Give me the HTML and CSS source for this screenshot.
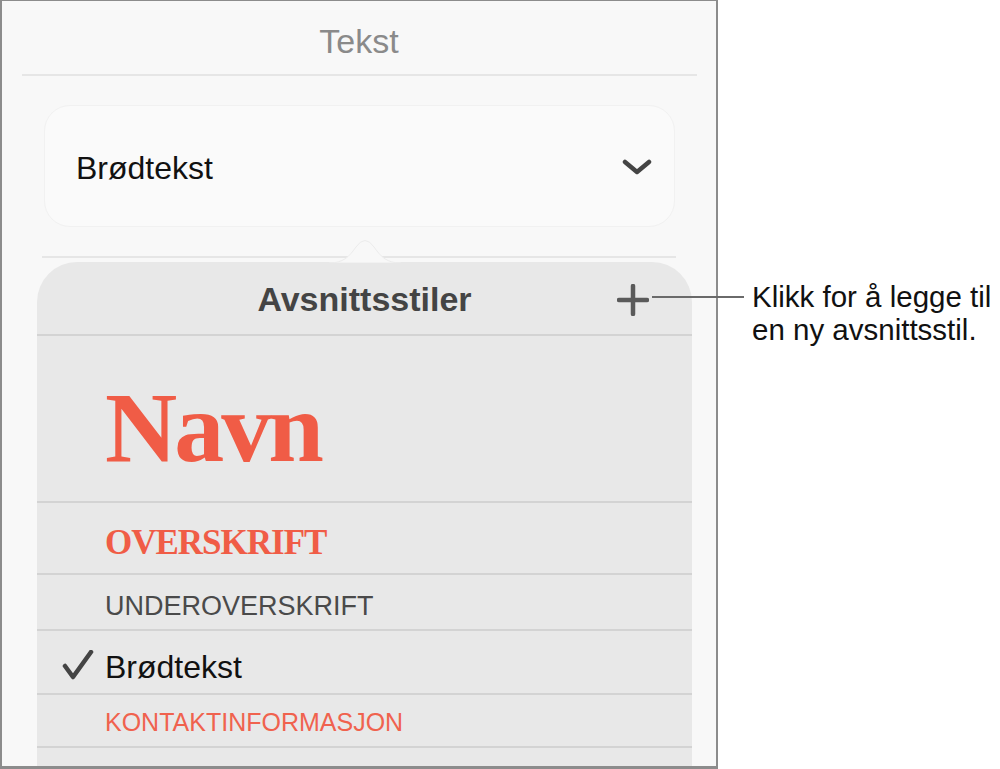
FILE: index.html
```html
<!DOCTYPE html>
<html lang="nb">
<head>
  <meta charset="UTF-8">
  <meta name="viewport" content="width=device-width, initial-scale=1.0">
  <title>Tekst</title>
  <link rel="stylesheet" href="styles.css">
</head>
<body>
  <div class="page">
    <div class="frame">
      <h1 class="title">Tekst</h1>
      <div class="rule rule-top"></div>

      <div class="style-picker">
        <span class="style-name">Brødtekst</span>
        <svg class="chevron" width="30" height="16" viewBox="0 0 30 16">
          <path d="M3 3 L15 13 L27 3" fill="none" stroke="#444" stroke-width="4.5" stroke-linecap="round" stroke-linejoin="round"/>
        </svg>
      </div>

      <div class="rule rule-mid"></div>

      <div class="popover">
        <svg class="popover-arrow" width="72" height="30" viewBox="0 0 72 30">
          <path d="M0 30 C14 30 20 24 27 14 Q36 1 45 14 C52 24 58 30 72 30 Z" fill="#f8f8f8" stroke="#ececec" stroke-width="1"/>
        </svg>
        <div class="popover-header">
          <span></span>
          <h2 class="popover-title">Avsnittsstiler</h2>
          <svg class="add-icon" width="32" height="32" viewBox="0 0 32 32">
            <path d="M16 2 V30 M2 16 H30" stroke="#5a5a5a" stroke-width="4.5" stroke-linecap="round"/>
          </svg>
        </div>
        <ul class="styles">
          <li class="row row-name"><span class="s-name">Navn</span></li>
          <li class="row row-heading"><span class="s-heading">OVERSKRIFT</span></li>
          <li class="row row-sub"><span class="s-sub">UNDEROVERSKRIFT</span></li>
          <li class="row row-body">
            <svg class="check" width="32" height="30" viewBox="0 0 32 30">
              <path d="M3 16 L11 27 L29 2" fill="none" stroke="#444" stroke-width="4.5" stroke-linecap="round" stroke-linejoin="round"/>
            </svg>
            <span class="s-body">Brødtekst</span>
          </li>
          <li class="row row-contact"><span class="s-contact">KONTAKTINFORMASJON</span></li>
          <li class="row row-empty"></li>
        </ul>
      </div>
    </div>

    <div class="note">Klikk for å legge til<br>en ny avsnittsstil.</div>
    <div class="leader"></div>
  </div>
</body>
</html>
```

FILE: styles.css
```css
body {
  margin: 0;
  background: #fff;
  font-family: "Liberation Sans", Arial, sans-serif;
}

.page {
  position: relative;
  display: flex;
  align-items: flex-start;
  width: 1000px;
  height: 769px;
}

.frame {
  box-sizing: border-box;
  width: 718px;
  height: 769px;
  border: 2px solid #8c8c8c;
  border-top-width: 1px;
  border-bottom-width: 3px;
  background: #f8f8f8;
  overflow: hidden;
}

.title {
  margin: 0;
  padding: 20px 0 13px;
  font-size: 34px;
  font-weight: normal;
  line-height: 40px;
  text-align: center;
  color: #8a8a8a;
}

.rule {
  height: 2px;
  background: #e6e6e6;
}

.rule-top {
  margin: 0 19px 0 20px;
}

.style-picker {
  display: flex;
  align-items: center;
  justify-content: space-between;
  box-sizing: border-box;
  height: 122px;
  margin: 29px 41px 0 42px;
  padding: 0 22px 0 31px;
  background: #fafafa;
  border: 1px solid #f1f1f1;
  border-radius: 26px;
}

.style-name {
  padding-top: 4px;
  font-size: 32px;
  color: #111;
  line-height: 36px;
}

.chevron {
  margin-top: 1px;
}

.rule-mid {
  margin: 29px 40px 0 40px;
}

.popover {
  position: relative;
  margin: 4px 24px 0 35px;
  height: 520px;
  background: #e8e8e8;
  border-radius: 40px 40px 0 0;
}

.popover-arrow {
  position: absolute;
  top: -29px;
  left: 292px;
}

.popover-header {
  display: grid;
  grid-template-columns: 1fr auto 1fr;
  align-items: center;
  height: 72px;
  border-bottom: 2px solid #d3d3d3;
}

.popover-title {
  margin: 0;
  padding-top: 2px;
  font-size: 34px;
  font-weight: bold;
  line-height: 40px;
  color: #444;
}

.add-icon {
  justify-self: end;
  margin: 4px 43px 0 0;
}

.styles {
  list-style: none;
  margin: 0;
  padding: 0;
}

.row {
  display: flex;
  align-items: flex-start;
  padding-left: 68px;
  border-bottom: 2px solid #d3d3d3;
  box-sizing: border-box;
}

.row-name {
  height: 167px;
  padding-top: 42px;
}

.s-name {
  font-family: "Liberation Serif", "Times New Roman", serif;
  font-weight: bold;
  font-size: 100px;
  line-height: 100px;
  letter-spacing: -3px;
  color: #f05c46;
}

.row-heading {
  height: 72px;
  padding-top: 20px;
}

.s-heading {
  font-family: "Liberation Serif", "Times New Roman", serif;
  font-weight: bold;
  font-size: 35px;
  line-height: 40px;
  letter-spacing: -1px;
  color: #f05c46;
}

.row-sub {
  height: 56px;
  padding-top: 15px;
}

.s-sub {
  font-size: 27px;
  line-height: 32px;
  color: #4a4a4a;
}

.row-body {
  position: relative;
  height: 64px;
  padding-top: 18px;
}

.check {
  position: absolute;
  left: 25px;
  top: 19px;
}

.s-body {
  font-size: 32px;
  line-height: 36px;
  color: #111;
}

.row-contact {
  height: 53px;
  padding-top: 12px;
}

.s-contact {
  font-size: 25px;
  line-height: 30px;
  color: #f0624e;
}

.row-empty {
  height: 60px;
  border-bottom: 0;
}

.note {
  margin: 280px 0 0 34px;
  font-size: 29.5px;
  line-height: 33px;
  color: #111;
}

.leader {
  position: absolute;
  left: 652px;
  top: 296px;
  width: 92px;
  height: 2px;
  background: #6a6a6a;
}
```
